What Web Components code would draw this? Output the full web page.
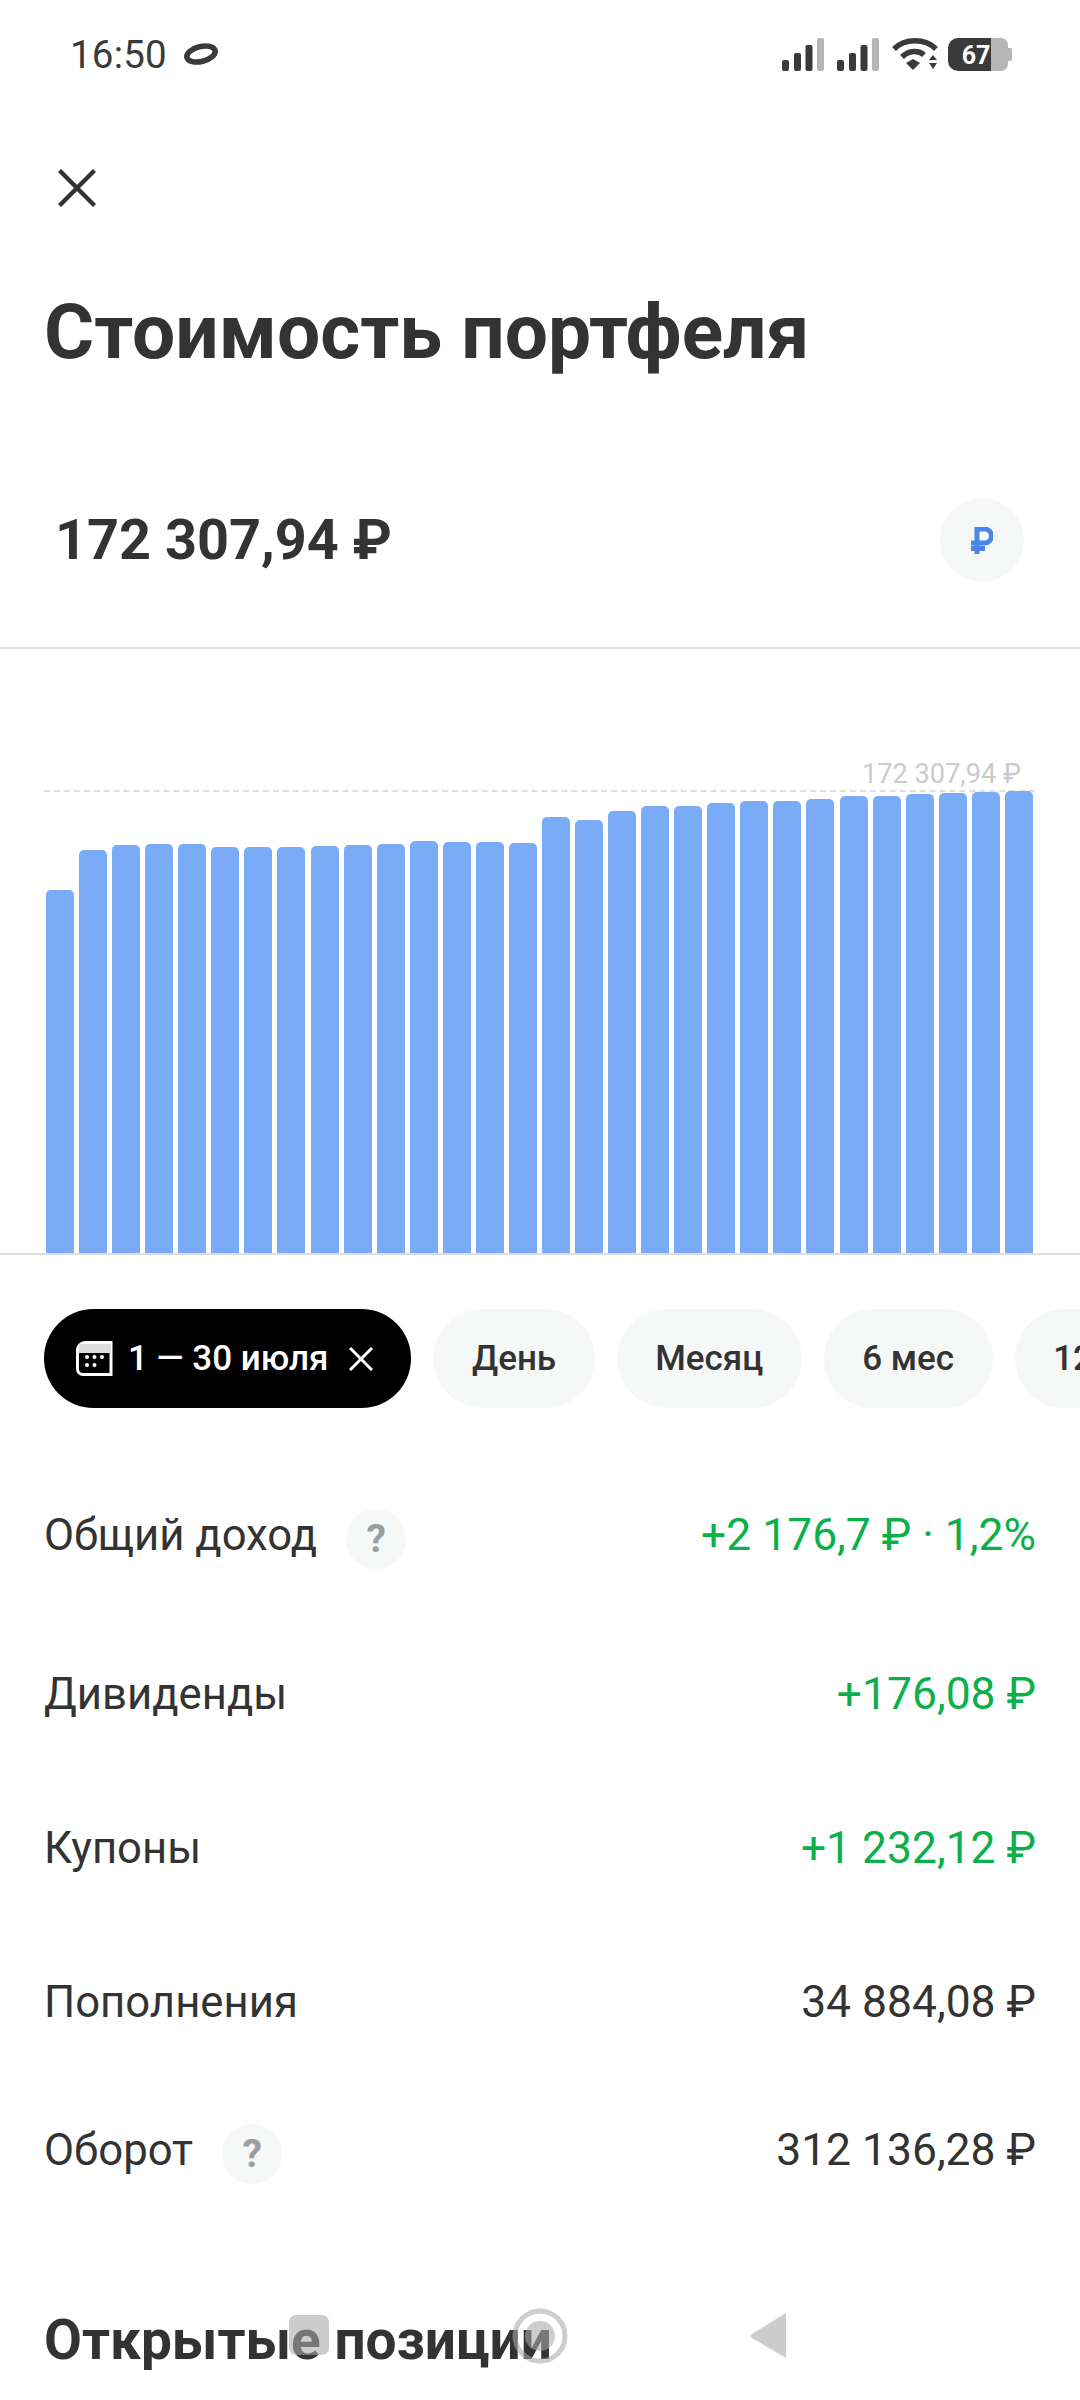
<!DOCTYPE html>
<html lang="ru"><head><meta charset="utf-8"><title>Стоимость портфеля</title>
<style>
html,body{margin:0;padding:0;background:#fff}
body{width:1080px;height:2400px;overflow:hidden;position:relative;font-family:Roboto,"Noto Sans",sans-serif;color:#333}
</style></head><body>
<app-screen>
  <status-bar></status-bar>
  <close-button></close-button>
  <page-title>Стоимость портфеля</page-title>
  <balance-row>172 307,94 ₽</balance-row>
  <bar-chart max-label="172 307,94 ₽"></bar-chart>
  <chip-strip>
    <period-chip active>1 — 30 июля</period-chip>
    <period-chip>День</period-chip>
    <period-chip>Месяц</period-chip>
    <period-chip>6 мес</period-chip>
    <period-chip>12 мес</period-chip>
  </chip-strip>
  <stat-list>
    <stat-row gap="0" help label="Общий доход" tone="up">+2 176,7 ₽ · 1,2%</stat-row>
    <stat-row gap="19" label="Дивиденды" tone="up">+176,08 ₽</stat-row>
    <stat-row gap="14" label="Купоны" tone="up">+1 232,12 ₽</stat-row>
    <stat-row gap="14" label="Пополнения">34 884,08 ₽</stat-row>
    <stat-row gap="8" help label="Оборот">312 136,28 ₽</stat-row>
  </stat-list>
  <section-title>Открытые позиции</section-title>
</app-screen>
<nav-overlay></nav-overlay>
<script>
function def(name, css, html, setup){
  customElements.define(name, class extends HTMLElement{
    constructor(){super();this.attachShadow({mode:'open'}).innerHTML='<style>'+css+'</style>'+html;}
    connectedCallback(){if(setup)setup(this);}
  });
}
const signal='<svg width="42" height="33" viewBox="0 0 42 33"><g fill="#3a3a3a"><rect x="0" y="22" width="7" height="11" rx="2"/><rect x="12" y="15" width="7" height="18" rx="2"/><rect x="23.500" y="7" width="7" height="26" rx="2"/></g><rect x="35" y="0" width="7" height="33" rx="2" fill="#b5b5b5"/></svg>';
def('app-screen',':host{display:flex;flex-direction:column;width:1080px;height:2400px}','<slot></slot>');
def('status-bar',
 ':host{display:flex;align-items:center;justify-content:space-between;height:108px;padding:0 68px 0 70px;box-sizing:border-box;flex:none}'+
 '.l{display:flex;align-items:center;gap:17px;font-size:38.500px;color:#3a3a3a;letter-spacing:.2px}.r{display:flex;align-items:center;gap:13px}svg{display:block}',
 '<div class="l"><span>16:50</span><svg width="34" height="24" viewBox="0 0 34 24"><ellipse cx="17" cy="12" rx="14.500" ry="7.500" transform="rotate(-14 17 12)" fill="none" stroke="#3a3a3a" stroke-width="5.500"/></svg></div>'+
 '<div class="r">'+signal+signal+
 '<svg width="46" height="33" viewBox="0 0 46 33"><path d="M2 11C13 0 33 0 44 11" fill="none" stroke="#3a3a3a" stroke-width="5.500"/><path d="M10 19C17 12 27 12 32 17" fill="none" stroke="#3a3a3a" stroke-width="5.500"/><path d="M14 25L21 21L28 25L21 32Z" fill="#3a3a3a"/><path d="M37 22l4-5 4 5zM37 25h8l-4 6z" fill="#3a3a3a"/></svg>'+
 '<svg width="64" height="33" viewBox="0 0 64 33" style="margin-left:-3px"><path d="M43 0h10a7 7 0 0 1 7 7v3h2a2 2 0 0 1 2 2v9a2 2 0 0 1-2 2h-2v3a7 7 0 0 1-7 7H43z" fill="#b5b5b5"/><path d="M10 0h33v33H10a10 10 0 0 1-10-10V10A10 10 0 0 1 10 0z" fill="#3a3a3a"/><text x="28" y="26" font-family="Roboto" font-weight="700" font-size="25" fill="#fff" text-anchor="middle">67</text></svg>'+
 '</div>');
def('close-button',':host{display:block;height:38px;margin-top:61px;padding:0 0 0 58px;flex:none}svg{display:block}',
 '<svg width="38" height="38" viewBox="0 0 38 38"><path d="M1.500 1.500L36.500 36.500M36.500 1.500L1.500 36.500" stroke="#333" stroke-width="4.400" fill="none"/></svg>');
def('page-title',':host{display:block;padding-left:44px;font-size:76.700px;font-weight:700;line-height:86px;height:86px;margin-top:82px;color:#333;flex:none}','<slot></slot>');
def('balance-row',':host{display:flex;align-items:center;justify-content:space-between;height:84px;padding:0 56px 0 55px;margin-top:123px;flex:none}'+
 '.v{font-size:55.800px;font-weight:700}.c{width:84px;height:84px;border-radius:50%;background:#f6f7f7;display:flex;align-items:center;justify-content:center}',
 '<span class="v"><slot></slot></span><span class="c"><svg width="22" height="27" viewBox="0 0 22 27"><path d="M6 27V2h7.500a7 7 0 0 1 0 14H0M0 21.500h14" fill="none" stroke="#4a86e8" stroke-width="5"/></svg></span>');
def('bar-chart',':host{display:block;position:relative;height:604px;margin-top:65px;border-top:2px solid #dcdee0;border-bottom:2px solid #dcdee0;box-sizing:content-box;flex:none}'+
 '.bars{position:absolute;left:46px;bottom:0;display:flex;gap:5.070px;align-items:flex-end}.bars i{display:block;width:28px;background:#7aabf7;border-radius:5px 5px 0 0}'+
 '.dash{position:absolute;left:44px;width:991px;top:141px;border-top:2px dashed #dedede}'+
 '.lab{position:absolute;right:59px;top:109px;font-size:27.200px;line-height:32px;color:#cbcbcb}',
 '<div class="dash"></div><div class="lab"></div><div class="bars"></div>',
 (el)=>{
   const s=el.shadowRoot;s.querySelector('.lab').textContent=el.getAttribute('max-label');
   const tops=[890,850,845,844,844,846.7,847.3,846.7,846,844.7,843.7,841,842,841.7,842.700,817,820,811,806.300,806,803,801.300,801,798.700,795.700,796.300,794.300,793,792,791];
   s.querySelector('.bars').innerHTML=tops.map(t=>'<i style="height:'+(1253-t)+'px"></i>').join('');
 });
def('chip-strip',':host{display:flex;gap:22px;padding-left:44px;margin-top:54px;height:99px;overflow:hidden;flex:none}','<slot></slot>');
def('period-chip',':host{display:flex;align-items:center;flex:none;height:99px;border-radius:50px;background:#f6f7f7;padding:0 38.500px;font-size:35px;font-weight:500;color:#333;box-sizing:border-box}'+
 ':host([active]){background:#000;color:#fff;padding:0 38px 0 32px;gap:15px}svg{display:none}:host([active]) svg{display:block}',
 '<svg width="37" height="35" viewBox="0 0 37 35"><path d="M9 1.500h26v32H7a5.500 5.500 0 0 1-5.500-5.500V9A7.500 7.500 0 0 1 9 1.500z" fill="none" stroke="#fff" stroke-width="3"/><path d="M3 3h32v9H3z" fill="#ddd"/><g fill="#fff"><circle cx="11" cy="16" r="2"/><circle cx="18.500" cy="16" r="2"/><circle cx="26" cy="16" r="2"/><circle cx="11" cy="24" r="2"/><circle cx="18.500" cy="24" r="2"/></g></svg><slot></slot>'+
 '<svg width="24" height="24" viewBox="0 0 24 24" style="margin-left:6px"><path d="M1 1L23 23M23 1L1 23" stroke="#fff" stroke-width="3" fill="none"/></svg>');
def('stat-list',':host{display:block;margin-top:57px;flex:none}','<slot></slot>');
def('stat-row',':host{display:flex;align-items:center;justify-content:space-between;height:140px;padding:0 44px;font-size:43.700px;color:#333}'+
 '.l{display:flex;align-items:center;gap:29px}.q{width:60px;height:60px;margin-top:8px;border-radius:50%;background:#f6f7f7;display:none;align-items:center;justify-content:center;font-size:39px;font-weight:700;color:#9a9da1}'+
 '.v{font-size:44.400px}:host([help]) .q{display:flex}:host([tone=up]) .v{color:#0cb04a}',
 '<span class="l"><span class="t"></span><span class="q">?</span></span><span class="v"><slot></slot></span>',
 (el)=>{el.style.marginTop=el.getAttribute('gap')+'px';el.shadowRoot.querySelector('.t').textContent=el.getAttribute('label');});
def('section-title',':host{display:block;padding-left:44px;margin-top:87px;font-size:55px;font-weight:700;line-height:66px;color:#333}','<slot></slot>');
def('nav-overlay',':host{position:absolute;left:0;top:2260px;width:1080px;height:140px;pointer-events:none}svg{position:absolute;left:0;top:0}',
 '<svg width="1080" height="140" viewBox="0 0 1080 140"><g fill="rgb(168,168,168)" fill-opacity=".58"><rect x="289" y="55" width="40" height="40" rx="7"/><circle cx="540" cy="76" r="15"/><path d="M786 53L752 74Q749 76 752 78L786 98Z"/></g><circle cx="540" cy="76" r="25" fill="none" stroke="rgb(168,168,168)" stroke-opacity=".58" stroke-width="5"/></svg>');
</script>
</body></html>
